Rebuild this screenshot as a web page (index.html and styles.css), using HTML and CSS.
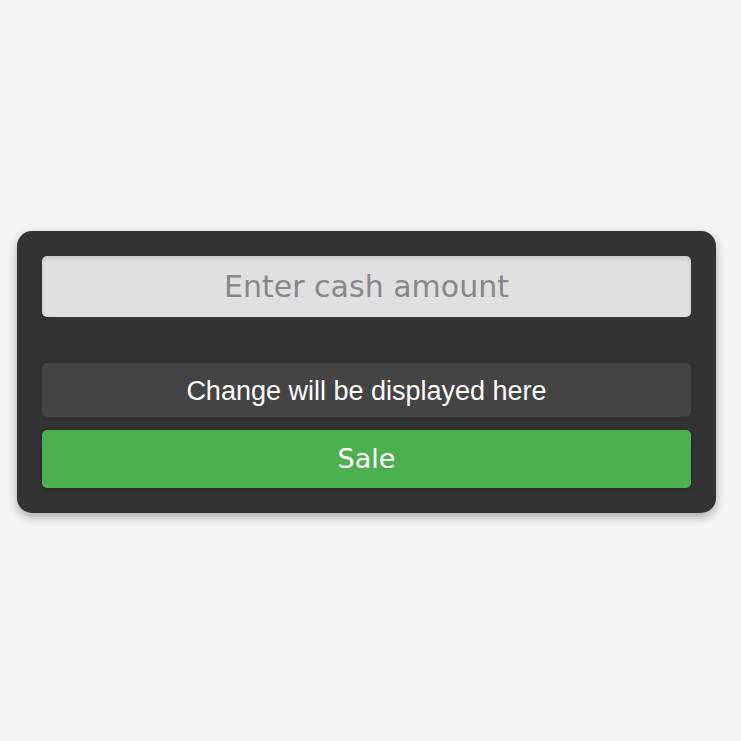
FILE: index.html
```html
<!DOCTYPE html>
<html>
<head>
<meta charset="utf-8">
<link rel="stylesheet" href="styles.css">
</head>
<body>
<div class="card">
  <input class="cash" type="text" placeholder="Enter cash amount">
  <div class="change">Change will be displayed here</div>
  <button class="sale">Sale</button>
</div>
</body>
</html>
```
FILE: styles.css
```css
html, body {
  margin: 0;
  height: 100%;
}
body {
  box-sizing: border-box;
  padding: 2px 8px 0 0;
  background: #f4f4f4;
  display: flex;
  justify-content: center;
  align-items: center;
  font-family: "DejaVu Sans", sans-serif;
}
.card {
  width: 649px;
  padding: 25px;
  background: #333333;
  border-radius: 15px;
  box-shadow: 0 4px 10px rgba(0, 0, 0, 0.3);
  display: flex;
  flex-direction: column;
}
.cash {
  box-sizing: border-box;
  height: 61px;
  width: 100%;
  border: none;
  border-radius: 5px;
  background: #e0e0e0;
  box-shadow: inset 0 2px 4px rgba(0, 0, 0, 0.12);
  font-family: "DejaVu Sans", sans-serif;
  font-size: 30px;
  text-align: center;
  color: #333;
  outline: none;
  margin-bottom: 46px;
  padding: 0;
}
.cash::placeholder {
  color: #888888;
}
.change {
  box-sizing: border-box;
  height: 54px;
  padding-top: 4px;
  background: #444444;
  border-radius: 5px;
  box-shadow: 0 -1px 4px rgba(0, 0, 0, 0.15);
  color: #ffffff;
  font-family: "Liberation Sans", Arial, sans-serif;
  font-size: 27px;
  display: flex;
  align-items: center;
  justify-content: center;
  margin-bottom: 13px;
}
.sale {
  height: 58px;
  border: none;
  border-radius: 5px;
  background: #4caf50;
  color: #ffffff;
  font-family: "DejaVu Sans", sans-serif;
  font-size: 27px;
  box-shadow: 0 2px 6px rgba(0, 0, 0, 0.25);
  padding: 0;
}
```
